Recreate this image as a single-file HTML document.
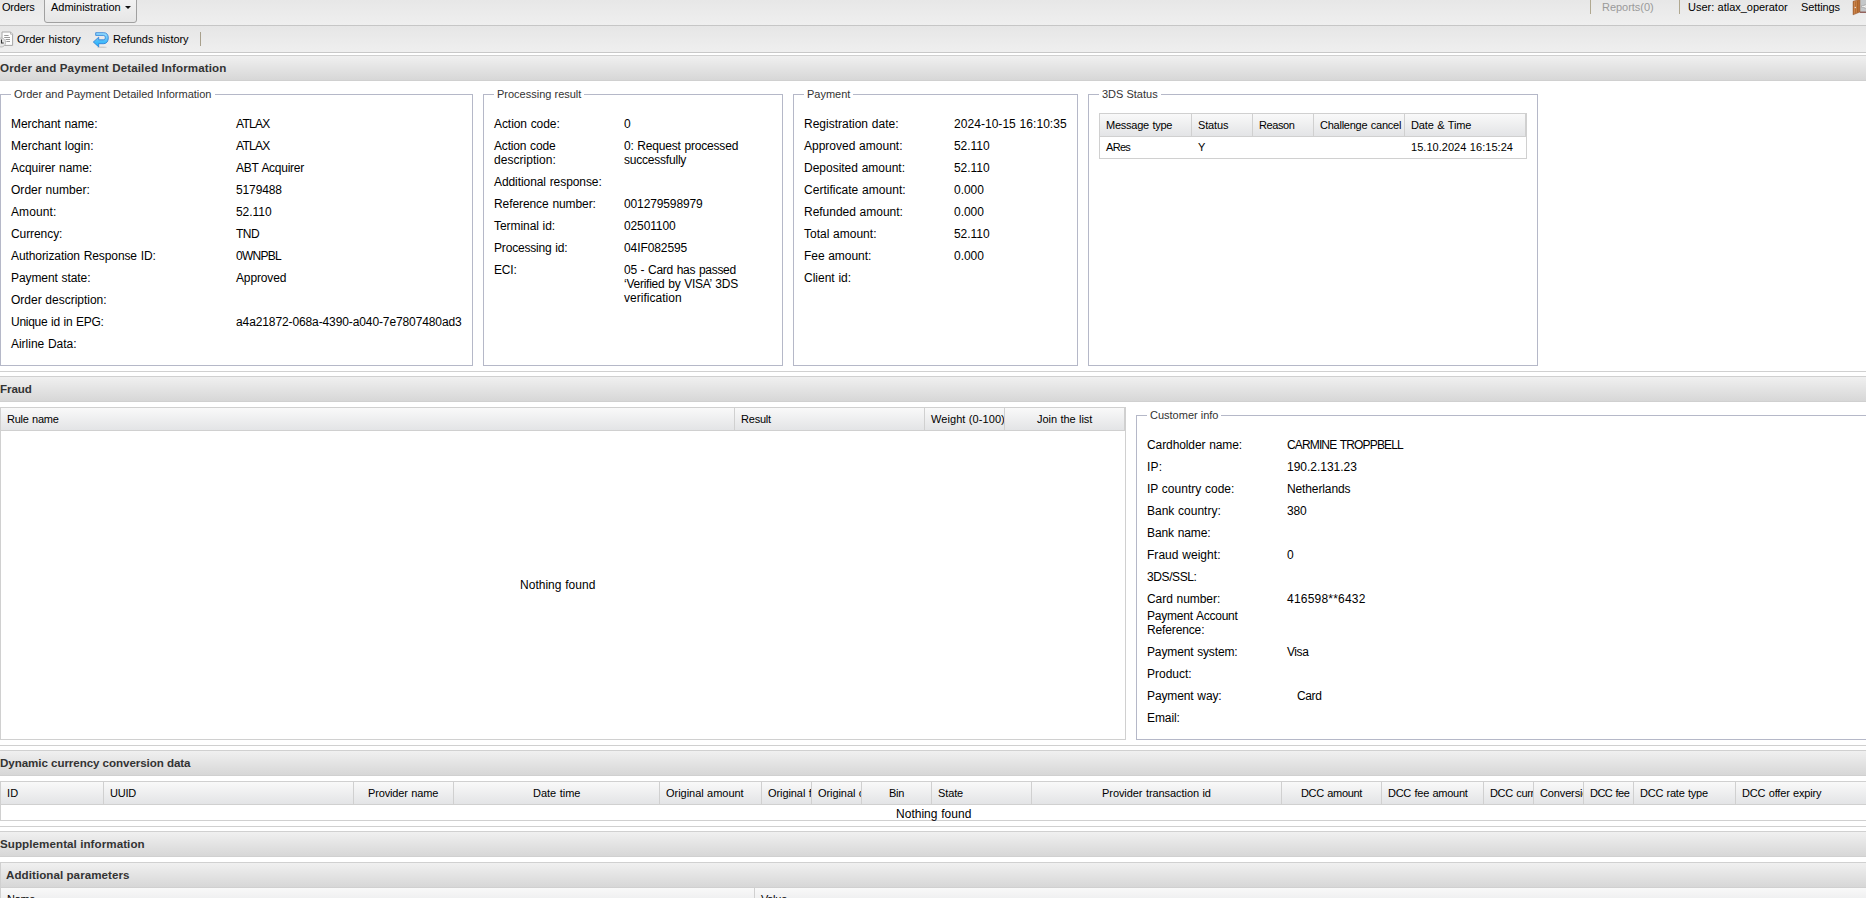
<!DOCTYPE html>
<html><head><meta charset="utf-8"><title>Order details</title>
<style>
*{box-sizing:border-box;margin:0;padding:0}
html,body{width:1866px;height:898px;overflow:hidden;background:#fff}
body{position:relative;font-family:"Liberation Sans",sans-serif;font-size:12px;color:#000}
.a{position:absolute;white-space:nowrap}
.t{position:absolute;white-space:nowrap;line-height:14px;height:14px}
.f12{font-size:12px}
.f11{font-size:11px}
.b{font-weight:bold;color:#333}
.bar{position:absolute;left:0;width:1866px}
.hd{position:absolute;left:0;width:1866px;height:26px;border-top:1px solid #d0d0d0;border-bottom:1px solid #d0d0d0;background:linear-gradient(#f0f0f0,#d7d7d7)}
.ln{position:absolute;left:0;width:1866px;height:1px;background:#d0d0d0}
.fs{position:absolute;border:1px solid #b5b8c8}
.lg{position:absolute;background:#fff;height:14px;line-height:14px;font-size:11px;color:#333;white-space:nowrap}
.gh{position:absolute;border-top:1px solid #d0d0d0;border-bottom:1px solid #d0d0d0;background:linear-gradient(#f9f9f9,#e3e4e6);height:24px}
.gc{position:absolute;top:0;height:22px;border-right:1px solid #d0d0d0;overflow:hidden}
.gb{position:absolute;border:1px solid #d0d0d0;background:#fff}
</style></head>
<body>
<div class="bar" style="top:0;height:26px;background:linear-gradient(#e7e7e7,#efefef);border-bottom:1px solid #c6c6c6"></div>
<div class="a" style="left:44px;top:-4px;width:93px;height:27px;border:1px solid #a0a0a0;border-radius:3px;background:linear-gradient(#f3f3f3,#e6e6e6)"></div>
<div class="t" style="left:2px;top:0px;font-size:11px;letter-spacing:-0.187px;">Orders</div>
<div class="t" style="left:51px;top:0px;font-size:11px;">Administration</div>
<div class="a" style="left:125px;top:6px;width:0;height:0;border-left:3px solid transparent;border-right:3px solid transparent;border-top:3px solid #111"></div>
<div class="a" style="left:1590px;top:0;width:1px;height:14px;background:#b0a890"></div>
<div class="a" style="left:1679px;top:0;width:1px;height:14px;background:#b0a890"></div>
<div class="t" style="left:1602px;top:0px;font-size:11px;letter-spacing:-0.030px;color:#9a9a9a;">Reports(0)</div>
<div class="t" style="left:1688px;top:0px;font-size:11px;letter-spacing:-0.022px;word-spacing:0.403px;">User: atlax_operator</div>
<div class="t" style="left:1801px;top:0px;font-size:11px;letter-spacing:-0.103px;">Settings</div>
<svg class="a" style="left:1852px;top:0" width="14" height="16" viewBox="0 0 14 16"><defs><linearGradient id="dr" x1="0" y1="0" x2="1" y2="0"><stop offset="0" stop-color="#a85a22"/><stop offset="0.25" stop-color="#d8935a"/><stop offset="0.55" stop-color="#c27a3c"/><stop offset="1" stop-color="#b56a30"/></linearGradient></defs><rect x="7.8" y="0" width="6.2" height="12" fill="#c4c7c9"/><rect x="7.8" y="11.7" width="6.2" height="1" fill="#6e2a22"/><path d="M9.6 5.7 H12.4 V4.6 H14 V8.4 H12.4 V7.3 H9.6 Z" fill="#fff" stroke="#8c8c8c" stroke-width="0.5"/><path d="M1.1 1.3 L7.9 -0.6 L7.9 12 L1.1 14.8 Z" fill="url(#dr)" stroke="#8e4a1e" stroke-width="0.5"/><path d="M3.4 1.5 V13.5 M5.6 1 V12.6" stroke="#98501f" stroke-width="0.6" opacity="0.9"/><circle cx="3.3" cy="7.5" r="0.7" fill="#e8e4e0"/></svg>
<div class="bar" style="top:26px;height:27px;background:linear-gradient(#e6e6e6,#efefef);border-bottom:1px solid #c8c8c8"></div>
<div class="t" style="left:17px;top:32px;font-size:11px;letter-spacing:-0.024px;word-spacing:0.405px;">Order history</div>
<div class="t" style="left:113px;top:32px;font-size:11px;letter-spacing:-0.097px;word-spacing:0.478px;">Refunds history</div>
<div class="a" style="left:200px;top:32px;width:1px;height:14px;background:#a8a08c"></div>
<svg class="a" style="left:0;top:30px" width="14" height="18" viewBox="0 0 14 18"><path d="M2 2 H10.6 L12.6 4.2 V15.4 H2 Z" fill="#fdfdfd" stroke="#a6a6a6"/><path d="M10.6 2 V4.2 H12.6" fill="#f4f4f4" stroke="#a6a6a6" stroke-width="0.8"/><path d="M4.2 5.5 H8.6 M4.2 7.5 H10 M5.6 9.5 H10 M6.4 11.5 H10" stroke="#8e8e8e" stroke-width="0.9"/><circle cx="1.1" cy="12.5" r="4.5" fill="#e6e6e6" stroke="#b6b6b6" stroke-width="0.9"/><path d="M1.5 9.4 V13 H3.7" stroke="#333" stroke-width="1.1" fill="none"/></svg>
<svg class="a" style="left:93px;top:31px" width="17" height="17" viewBox="0 0 17 17"><defs><linearGradient id="bl" x1="0" y1="0" x2="0" y2="1"><stop offset="0" stop-color="#9adfff"/><stop offset="0.5" stop-color="#58bff8"/><stop offset="1" stop-color="#14b2ff"/></linearGradient></defs><ellipse cx="9" cy="16.2" rx="5" ry="0.7" fill="#000" opacity="0.13"/><path d="M2.7 1.7 H10.8 C13.8 1.7 15.3 3.9 15.3 6.9 C15.3 10.2 13.6 12.7 10.8 12.7 H5.7 V15.9 L0.3 11 L5.7 6.2 V8.8 H10.3 C11.8 8.8 12.3 7.7 12.3 6.6 C12.3 5.4 11.8 4.4 10.3 4.4 H2.7 Z" fill="url(#bl)" stroke="#2a7bd4" stroke-width="0.8" stroke-linejoin="round"/></svg>
<div class="hd" style="top:55px"></div>
<div class="t b" style="left:0px;top:61px;font-size:11.6px;letter-spacing:0.111px;">Order and Payment Detailed Information</div>
<div class="hd" style="top:376px"></div>
<div class="t b" style="left:0px;top:382px;font-size:11.6px;letter-spacing:-0.085px;">Fraud</div>
<div class="hd" style="top:750px"></div>
<div class="t b" style="left:0px;top:756px;font-size:11.6px;letter-spacing:-0.068px;">Dynamic currency conversion data</div>
<div class="hd" style="top:831px"></div>
<div class="t b" style="left:0px;top:837px;font-size:11.6px;letter-spacing:0.072px;">Supplemental information</div>
<div class="ln" style="top:371px"></div>
<div class="ln" style="top:745px"></div>
<div class="ln" style="top:826px"></div>
<div class="fs" style="left:0px;top:94px;width:473px;height:272px"></div>
<div class="lg" style="left:11px;top:87px;padding:0 3px 0 3px;">Order and Payment Detailed Information</div>
<div class="fs" style="left:483px;top:94px;width:300px;height:272px"></div>
<div class="lg" style="left:494px;top:87px;padding:0 3px 0 3px;">Processing result</div>
<div class="fs" style="left:793px;top:94px;width:285px;height:272px"></div>
<div class="lg" style="left:804px;top:87px;padding:0 3px 0 3px;">Payment</div>
<div class="fs" style="left:1088px;top:94px;width:450px;height:272px"></div>
<div class="lg" style="left:1099px;top:87px;padding:0 3px 0 3px;">3DS Status</div>
<div class="fs" style="left:1136px;top:415px;width:765px;height:325px"></div>
<div class="lg" style="left:1147px;top:408px;padding:0 3px 0 3px;">Customer info</div>
<div class="t" style="left:11px;top:117px;font-size:12px;letter-spacing:-0.046px;word-spacing:0.463px;">Merchant name:</div>
<div class="t" style="left:236px;top:117px;font-size:12px;letter-spacing:-0.738px;">ATLAX</div>
<div class="t" style="left:11px;top:139px;font-size:12px;word-spacing:0.417px;">Merchant login:</div>
<div class="t" style="left:236px;top:139px;font-size:12px;letter-spacing:-0.738px;">ATLAX</div>
<div class="t" style="left:11px;top:161px;font-size:12px;letter-spacing:-0.050px;word-spacing:0.466px;">Acquirer name:</div>
<div class="t" style="left:236px;top:161px;font-size:12px;letter-spacing:-0.274px;word-spacing:0.690px;">ABT Acquirer</div>
<div class="t" style="left:11px;top:183px;font-size:12px;letter-spacing:0.031px;word-spacing:0.385px;">Order number:</div>
<div class="t" style="left:236px;top:183px;font-size:12px;letter-spacing:-0.123px;">5179488</div>
<div class="t" style="left:11px;top:205px;font-size:12px;letter-spacing:0.104px;">Amount:</div>
<div class="t" style="left:236px;top:205px;font-size:12px;letter-spacing:-0.052px;">52.110</div>
<div class="t" style="left:11px;top:227px;font-size:12px;letter-spacing:-0.077px;">Currency:</div>
<div class="t" style="left:236px;top:227px;font-size:12px;letter-spacing:-0.500px;">TND</div>
<div class="t" style="left:11px;top:249px;font-size:12px;letter-spacing:-0.089px;word-spacing:0.505px;">Authorization Response ID:</div>
<div class="t" style="left:236px;top:249px;font-size:12px;letter-spacing:-0.716px;">0WNPBL</div>
<div class="t" style="left:11px;top:271px;font-size:12px;letter-spacing:-0.080px;word-spacing:0.496px;">Payment state:</div>
<div class="t" style="left:236px;top:271px;font-size:12px;letter-spacing:-0.145px;">Approved</div>
<div class="t" style="left:11px;top:293px;font-size:12px;letter-spacing:-0.011px;word-spacing:0.427px;">Order description:</div>
<div class="t" style="left:11px;top:315px;font-size:12px;letter-spacing:-0.288px;word-spacing:0.704px;">Unique id in EPG:</div>
<div class="t" style="left:236px;top:315px;font-size:12px;letter-spacing:-0.109px;">a4a21872-068a-4390-a040-7e7807480ad3</div>
<div class="t" style="left:11px;top:337px;font-size:12px;letter-spacing:-0.023px;word-spacing:0.440px;">Airline Data:</div>
<div class="t" style="left:494px;top:117px;font-size:12px;letter-spacing:-0.069px;word-spacing:0.485px;">Action code:</div>
<div class="t" style="left:624px;top:117px;font-size:12px;letter-spacing:-0.123px;">0</div>
<div class="t" style="left:494px;top:139px;font-size:12px;letter-spacing:-0.168px;word-spacing:0.584px;">Action code</div>
<div class="t" style="left:494px;top:153px;font-size:12px;letter-spacing:0.033px;">description:</div>
<div class="t" style="left:624px;top:139px;font-size:12px;letter-spacing:-0.192px;word-spacing:0.608px;">0: Request processed</div>
<div class="t" style="left:624px;top:153px;font-size:12px;letter-spacing:-0.213px;">successfully</div>
<div class="t" style="left:494px;top:175px;font-size:12px;letter-spacing:-0.076px;word-spacing:0.492px;">Additional response:</div>
<div class="t" style="left:494px;top:197px;font-size:12px;letter-spacing:-0.082px;word-spacing:0.499px;">Reference number:</div>
<div class="t" style="left:624px;top:197px;font-size:12px;letter-spacing:-0.123px;">001279598979</div>
<div class="t" style="left:494px;top:219px;font-size:12px;letter-spacing:-0.063px;word-spacing:0.479px;">Terminal id:</div>
<div class="t" style="left:624px;top:219px;font-size:12px;letter-spacing:-0.123px;">02501100</div>
<div class="t" style="left:494px;top:241px;font-size:12px;letter-spacing:-0.178px;word-spacing:0.594px;">Processing id:</div>
<div class="t" style="left:624px;top:241px;font-size:12px;letter-spacing:-0.092px;">04IF082595</div>
<div class="t" style="left:494px;top:263px;font-size:12px;letter-spacing:-0.167px;">ECI:</div>
<div class="t" style="left:624px;top:263px;font-size:12px;letter-spacing:-0.282px;word-spacing:0.698px;">05 - Card has passed</div>
<div class="t" style="left:624px;top:277px;font-size:12px;letter-spacing:-0.248px;word-spacing:0.664px;">‘Verified by VISA’ 3DS</div>
<div class="t" style="left:624px;top:291px;font-size:12px;letter-spacing:0.028px;">verification</div>
<div class="t" style="left:804px;top:117px;font-size:12px;word-spacing:0.422px;">Registration date:</div>
<div class="t" style="left:954px;top:117px;font-size:12px;letter-spacing:0.046px;word-spacing:0.371px;">2024-10-15 16:10:35</div>
<div class="t" style="left:804px;top:139px;font-size:12px;word-spacing:0.415px;">Approved amount:</div>
<div class="t" style="left:954px;top:139px;font-size:12px;letter-spacing:-0.052px;">52.110</div>
<div class="t" style="left:804px;top:161px;font-size:12px;letter-spacing:-0.010px;word-spacing:0.426px;">Deposited amount:</div>
<div class="t" style="left:954px;top:161px;font-size:12px;letter-spacing:-0.052px;">52.110</div>
<div class="t" style="left:804px;top:183px;font-size:12px;letter-spacing:0.027px;word-spacing:0.389px;">Certificate amount:</div>
<div class="t" style="left:954px;top:183px;font-size:12px;letter-spacing:-0.038px;">0.000</div>
<div class="t" style="left:804px;top:205px;font-size:12px;letter-spacing:-0.022px;word-spacing:0.438px;">Refunded amount:</div>
<div class="t" style="left:954px;top:205px;font-size:12px;letter-spacing:-0.038px;">0.000</div>
<div class="t" style="left:804px;top:227px;font-size:12px;word-spacing:0.424px;">Total amount:</div>
<div class="t" style="left:954px;top:227px;font-size:12px;letter-spacing:-0.052px;">52.110</div>
<div class="t" style="left:804px;top:249px;font-size:12px;letter-spacing:-0.060px;word-spacing:0.476px;">Fee amount:</div>
<div class="t" style="left:954px;top:249px;font-size:12px;letter-spacing:-0.038px;">0.000</div>
<div class="t" style="left:804px;top:271px;font-size:12px;word-spacing:0.417px;">Client id:</div>
<div class="t" style="left:1147px;top:438px;font-size:12px;letter-spacing:-0.093px;word-spacing:0.509px;">Cardholder name:</div>
<div class="t" style="left:1287px;top:438px;font-size:12px;letter-spacing:-0.861px;word-spacing:1.277px;">CARMINE TROPPBELL</div>
<div class="t" style="left:1147px;top:460px;font-size:12px;letter-spacing:0.223px;">IP:</div>
<div class="t" style="left:1287px;top:460px;font-size:12px;letter-spacing:-0.016px;">190.2.131.23</div>
<div class="t" style="left:1147px;top:482px;font-size:12px;word-spacing:0.412px;">IP country code:</div>
<div class="t" style="left:1287px;top:482px;font-size:12px;letter-spacing:-0.119px;">Netherlands</div>
<div class="t" style="left:1147px;top:504px;font-size:12px;word-spacing:0.416px;">Bank country:</div>
<div class="t" style="left:1287px;top:504px;font-size:12px;letter-spacing:-0.123px;">380</div>
<div class="t" style="left:1147px;top:526px;font-size:12px;letter-spacing:-0.113px;word-spacing:0.529px;">Bank name:</div>
<div class="t" style="left:1147px;top:548px;font-size:12px;letter-spacing:0.032px;word-spacing:0.384px;">Fraud weight:</div>
<div class="t" style="left:1287px;top:548px;font-size:12px;letter-spacing:-0.123px;">0</div>
<div class="t" style="left:1147px;top:570px;font-size:12px;letter-spacing:-0.391px;">3DS/SSL:</div>
<div class="t" style="left:1147px;top:592px;font-size:12px;letter-spacing:-0.053px;word-spacing:0.469px;">Card number:</div>
<div class="t" style="left:1287px;top:592px;font-size:12px;letter-spacing:0.211px;">416598**6432</div>
<div class="t" style="left:1147px;top:609px;font-size:12px;letter-spacing:-0.224px;word-spacing:0.640px;">Payment Account</div>
<div class="t" style="left:1147px;top:623px;font-size:12px;letter-spacing:-0.137px;">Reference:</div>
<div class="t" style="left:1147px;top:645px;font-size:12px;letter-spacing:-0.137px;word-spacing:0.553px;">Payment system:</div>
<div class="t" style="left:1287px;top:645px;font-size:12px;letter-spacing:-0.435px;">Visa</div>
<div class="t" style="left:1147px;top:667px;font-size:12px;letter-spacing:-0.014px;">Product:</div>
<div class="t" style="left:1147px;top:689px;font-size:12px;letter-spacing:-0.108px;word-spacing:0.524px;">Payment way:</div>
<div class="t" style="left:1147px;top:711px;font-size:12px;letter-spacing:-0.083px;">Email:</div>
<div class="t" style="left:1297px;top:689px;font-size:12px;letter-spacing:-0.387px;">Card</div>
<div class="gb" style="left:1099px;top:113px;width:428px;height:46px"></div>
<div class="gh" style="left:1100px;top:113px;width:426px">
<div class="gc" style="left:0px;width:92px;"><div class="t" style="left:6px;top:4px;font-size:11px;letter-spacing:-0.240px;word-spacing:0.621px;">Message type</div></div>
<div class="gc" style="left:92px;width:61px;"><div class="t" style="left:6px;top:4px;font-size:11px;letter-spacing:-0.146px;">Status</div></div>
<div class="gc" style="left:153px;width:61px;"><div class="t" style="left:6px;top:4px;font-size:11px;letter-spacing:-0.415px;">Reason</div></div>
<div class="gc" style="left:214px;width:91px;"><div class="t" style="left:6px;top:4px;font-size:11px;letter-spacing:-0.240px;word-spacing:0.622px;">Challenge cancel</div></div>
<div class="gc" style="left:305px;width:121px;"><div class="t" style="left:6px;top:4px;font-size:11px;letter-spacing:-0.101px;word-spacing:0.483px;">Date &amp; Time</div></div>
</div>
<div class="t" style="left:1106px;top:140px;font-size:11px;letter-spacing:-0.694px;">ARes</div>
<div class="t" style="left:1198px;top:140px;font-size:11px;letter-spacing:-0.999px;">Y</div>
<div class="t" style="left:1411px;top:140px;font-size:11px;letter-spacing:0.036px;word-spacing:0.345px;">15.10.2024 16:15:24</div>
<div class="gb" style="left:0px;top:407px;width:1126px;height:333px"></div>
<div class="gh" style="left:1px;top:407px;width:1124px">
<div class="gc" style="left:0px;width:734px;"><div class="t" style="left:6px;top:4px;font-size:11px;letter-spacing:-0.240px;word-spacing:0.622px;">Rule name</div></div>
<div class="gc" style="left:734px;width:190px;"><div class="t" style="left:6px;top:4px;font-size:11px;letter-spacing:-0.218px;">Result</div></div>
<div class="gc" style="left:924px;width:80px;"><div class="t" style="left:6px;top:4px;font-size:11px;letter-spacing:0.066px;word-spacing:0.315px;">Weight (0-100)</div></div>
<div class="gc" style="left:1004px;width:120px;"><div class="t" style="left:32px;top:4px;font-size:11px;letter-spacing:-0.044px;word-spacing:0.425px;">Join the list</div></div>
</div>
<div class="t" style="left:520px;top:578px;font-size:12px;letter-spacing:0.019px;word-spacing:0.398px;">Nothing found</div>
<div class="gb" style="left:0px;top:781px;width:1901px;height:40px"></div>
<div class="gh" style="left:1px;top:781px;width:1899px">
<div class="gc" style="left:0px;width:103px;"><div class="t" style="left:6px;top:4px;font-size:11px;letter-spacing:0.287px;">ID</div></div>
<div class="gc" style="left:103px;width:250px;"><div class="t" style="left:6px;top:4px;font-size:11px;letter-spacing:-0.222px;">UUID</div></div>
<div class="gc" style="left:353px;width:100px;"><div class="t" style="left:14px;top:4px;font-size:11px;letter-spacing:-0.143px;word-spacing:0.524px;">Provider name</div></div>
<div class="gc" style="left:453px;width:206px;"><div class="t" style="left:79px;top:4px;font-size:11px;word-spacing:0.390px;">Date time</div></div>
<div class="gc" style="left:659px;width:102px;"><div class="t" style="left:6px;top:4px;font-size:11px;letter-spacing:-0.028px;word-spacing:0.409px;">Original amount</div></div>
<div class="gc" style="left:761px;width:50px;"><div class="t" style="left:6px;top:4px;font-size:11px;letter-spacing:-0.078px;word-spacing:0.459px;">Original fee</div></div>
<div class="gc" style="left:811px;width:50px;"><div class="t" style="left:6px;top:4px;font-size:11px;letter-spacing:-0.074px;word-spacing:0.456px;">Original currency</div></div>
<div class="gc" style="left:861px;width:70px;"><div class="t" style="left:27px;top:4px;font-size:11px;letter-spacing:-0.254px;">Bin</div></div>
<div class="gc" style="left:931px;width:100px;"><div class="t" style="left:6px;top:4px;font-size:11px;letter-spacing:-0.126px;">State</div></div>
<div class="gc" style="left:1031px;width:250px;"><div class="t" style="left:70px;top:4px;font-size:11px;letter-spacing:-0.062px;word-spacing:0.443px;">Provider transaction id</div></div>
<div class="gc" style="left:1281px;width:100px;"><div class="t" style="left:19px;top:4px;font-size:11px;letter-spacing:-0.322px;word-spacing:0.703px;">DCC amount</div></div>
<div class="gc" style="left:1381px;width:102px;"><div class="t" style="left:6px;top:4px;font-size:11px;letter-spacing:-0.260px;word-spacing:0.641px;">DCC fee amount</div></div>
<div class="gc" style="left:1483px;width:50px;"><div class="t" style="left:6px;top:4px;font-size:11px;letter-spacing:-0.336px;word-spacing:0.717px;">DCC currency</div></div>
<div class="gc" style="left:1533px;width:50px;"><div class="t" style="left:6px;top:4px;font-size:11px;letter-spacing:-0.136px;word-spacing:0.517px;">Conversion rate</div></div>
<div class="gc" style="left:1583px;width:50px;"><div class="t" style="left:6px;top:4px;font-size:11px;letter-spacing:-0.560px;word-spacing:0.942px;">DCC fee</div></div>
<div class="gc" style="left:1633px;width:102px;"><div class="t" style="left:6px;top:4px;font-size:11px;letter-spacing:-0.240px;word-spacing:0.622px;">DCC rate type</div></div>
<div class="gc" style="left:1735px;width:165px;"><div class="t" style="left:6px;top:4px;font-size:11px;letter-spacing:-0.179px;word-spacing:0.561px;">DCC offer expiry</div></div>
</div>
<div class="t" style="left:896px;top:807px;font-size:12px;letter-spacing:0.019px;word-spacing:0.398px;">Nothing found</div>
<div class="a" style="left:0;top:862px;width:1900px;height:26px;border:1px solid #d0d0d0;background:linear-gradient(#f0f0f0,#d7d7d7)"></div>
<div class="t b" style="left:6px;top:868px;font-size:11.6px;letter-spacing:0.054px;">Additional parameters</div>
<div class="a" style="left:0;top:888px;width:1900px;height:24px;border-left:1px solid #d0d0d0;background:linear-gradient(#f9f9f9,#e3e4e6)"></div>
<div class="a" style="left:754px;top:888px;width:1px;height:24px;background:#d0d0d0"></div>
<div class="t" style="left:7px;top:892px;font-size:11px;letter-spacing:-0.299px;">Name</div>
<div class="t" style="left:761px;top:892px;font-size:11px;letter-spacing:-0.263px;">Value</div>
</body></html>
